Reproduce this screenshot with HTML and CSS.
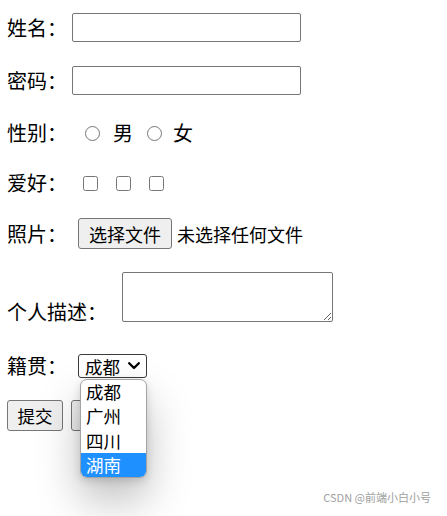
FILE: index.html
```html
<!DOCTYPE html>
<html lang="zh">
<head>
<meta charset="utf-8">
<title>表单</title>
<link rel="stylesheet" href="styles.css">
</head>
<body>
<form class="form">
  <div class="row r1"><span class="label">姓名：</span><input class="text" type="text"></div>
  <div class="row r2"><span class="label">密码：</span><input class="text" type="password"></div>
  <div class="row r3">
    <span class="label">性别：</span>
    <input type="radio" class="radio first" name="sex"><span class="opt">男</span>
    <input type="radio" class="radio" name="sex"><span class="opt">女</span>
  </div>
  <div class="row r4">
    <span class="label">爱好：</span>
    <input type="checkbox" class="check first"><input type="checkbox" class="check"><input type="checkbox" class="check">
  </div>
  <div class="row r5"><span class="label">照片：</span><span class="filebtn">选择文件</span><span class="filetext">未选择任何文件</span></div>
  <div class="row r6"><span class="label">个人描述：</span><textarea class="area"></textarea></div>
  <div class="row r7">
    <span class="label">籍贯：</span>
    <div class="select-wrap">
      <div class="select"><span>成都</span><svg class="chev" width="12" height="8" viewBox="0 0 12 8"><polyline points="1.2,1.2 6,6 10.8,1.2" fill="none" stroke="#000" stroke-width="2.3" stroke-linecap="round" stroke-linejoin="round"/></svg></div>
      <ul class="dropdown">
        <li class="option">成都</li>
        <li class="option">广州</li>
        <li class="option">四川</li>
        <li class="option active">湖南</li>
      </ul>
    </div>
  </div>
  <div class="row r8"><button type="button" class="btn">提交</button><button type="reset" class="btn second" aria-label="重置"></button></div>
</form>
<div class="watermark">CSDN @前端小白小号</div>
</body>
</html>
```

FILE: styles.css
```css
html, body {
  margin: 0;
  padding: 0;
  background: #fff;
}
body {
  font-family: "Noto Sans CJK SC", "Microsoft YaHei", sans-serif;
  color: #000;
  width: 447px;
  height: 516px;
  position: relative;
  overflow: hidden;
}
.form {
  padding-left: 7px;
  display: flex;
  flex-direction: column;
}
.row {
  display: flex;
  align-items: center;
}
.label {
  font-size: 20px;
  line-height: 20px;
  white-space: nowrap;
}
.r1 { margin-top: 13px; height: 29px; }
.r2 { margin-top: 24px; height: 29px; }
.r3 { margin-top: 24px; height: 28px; }
.r4 { margin-top: 22px; height: 28px; }
.r5 { margin-top: 21px; height: 31px; }
.r6 { margin-top: 23px; height: 50px; align-items: flex-end; }
.r7 { margin-top: 32px; height: 24px; }
.r8 { margin-top: 22px; height: 31px; }

.text {
  box-sizing: border-box;
  width: 229px;
  height: 29px;
  margin: 0 0 0 5px;
  border: 1px solid #767676;
  border-radius: 2px;
  padding: 0 4px;
  font-size: 18px;
}
.radio {
  width: 15px;
  height: 15px;
  margin: 0 0 0 14px;
}
.radio.first { margin-left: 18px; }
.opt {
  font-size: 20px;
  line-height: 20px;
  margin-left: 13px;
}
.opt:last-child { margin-left: 11px; }
.check {
  width: 15px;
  height: 15px;
  margin: 0 0 0 18px;
}
.check.first { margin-left: 16px; }

.filebtn {
  box-sizing: border-box;
  width: 94px;
  height: 31px;
  margin-left: 11px;
  background: #efefef;
  border: 1px solid #767676;
  border-radius: 3px;
  font-size: 18px;
  display: flex;
  align-items: center;
  justify-content: center;
}
.filetext {
  font-size: 18px;
  margin-left: 5px;
}
.area {
  display: block;
  box-sizing: border-box;
  width: 211px;
  height: 50px;
  margin: 0 0 0 15px;
  border: 1px solid #767676;
  border-radius: 2px;
  padding: 2px;
  font-family: inherit;
}

.select-wrap {
  position: relative;
  margin-left: 11px;
}
.select {
  box-sizing: border-box;
  width: 69px;
  height: 24px;
  border: 1px solid #3b3b3b;
  border-radius: 3px;
  padding-left: 6px;
  font-size: 17.5px;
  display: flex;
  align-items: center;
}
.chev {
  margin-left: 8px;
}
.dropdown {
  position: absolute;
  left: 2px;
  top: 25px;
  width: 67px;
  box-sizing: border-box;
  margin: 0;
  padding: 0;
  list-style: none;
  background: #fff;
  border: 1px solid #a3a3a3;
  border-radius: 7px;
  overflow: hidden;
  box-shadow: 0 22px 44px rgba(0, 0, 0, 0.26), 0 3px 8px rgba(0, 0, 0, 0.14);
  z-index: 2;
}
.option {
  height: 24.25px;
  line-height: 24.25px;
  padding-left: 5px;
  font-size: 17.5px;
}
.option.active {
  background: #1e90ff;
  color: #fff;
}

.btn {
  box-sizing: border-box;
  width: 56px;
  height: 31px;
  margin: 0;
  padding: 0;
  background: #efefef;
  border: 1px solid #767676;
  border-radius: 3px;
  font-family: inherit;
  font-size: 17.5px;
  color: #000;
}
.btn.second { margin-left: 8px; }

.watermark {
  position: absolute;
  right: 16px;
  bottom: 11px;
  font-size: 11px;
  color: #a0a0a0;
  white-space: nowrap;
}
```
